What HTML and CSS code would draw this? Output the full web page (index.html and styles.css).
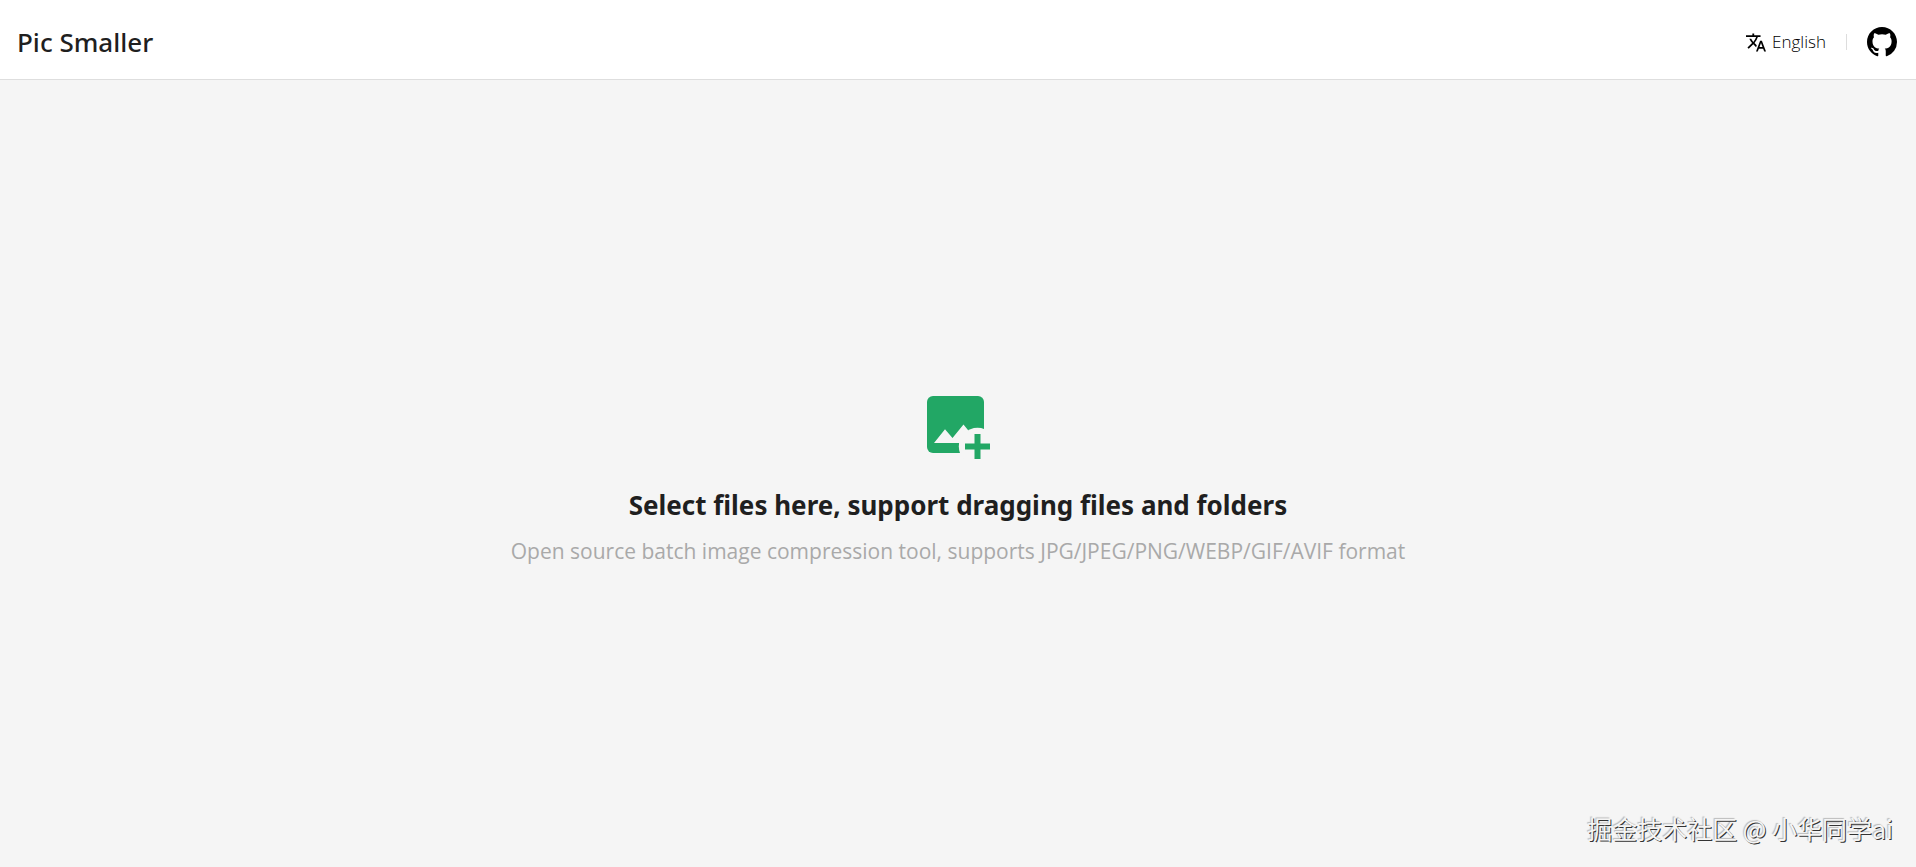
FILE: index.html
```html
<!DOCTYPE html>
<html lang="en">
<head>
<meta charset="utf-8">
<title>Pic Smaller</title>
<link rel="stylesheet" href="styles.css">
</head>
<body>
<header class="header">
  <h1 class="brand">Pic Smaller</h1>
  <nav class="tools">
    <button class="language" type="button">
      <svg class="language-icon" viewBox="1 2 22 20" aria-hidden="true"><path d="M12.87 15.07l-2.54-2.51.03-.03A17.52 17.52 0 0 0 14.07 6H17V4h-7V2H8v2H1v1.99h11.17C11.5 7.92 10.44 9.75 9 11.35 8.07 10.32 7.3 9.19 6.69 8h-2c.73 1.63 1.73 3.17 2.98 4.56l-5.09 5.02L4 19l5-5 3.11 3.11.76-2.04zM18.5 10h-2L12 22h2l1.12-3h4.75L21 22h2l-4.5-12zm-2.62 7l1.62-4.33L19.12 17h-3.24z"/></svg>
      <span>English</span>
    </button>
    <span class="divider"></span>
    <a class="github" href="#" aria-label="GitHub">
      <svg class="github-icon" viewBox="0 0 16 16" aria-hidden="true"><path d="M8 0C3.58 0 0 3.58 0 8c0 3.54 2.29 6.53 5.47 7.59.4.07.55-.17.55-.38 0-.19-.01-.82-.01-1.49-2.01.37-2.53-.49-2.69-.94-.09-.23-.48-.94-.82-1.13-.28-.15-.68-.52-.01-.53.63-.01 1.08.58 1.23.82.72 1.21 1.87.87 2.33.66.07-.52.28-.87.51-1.07-1.78-.2-3.64-.89-3.64-3.95 0-.87.31-1.59.82-2.15-.08-.2-.36-1.02.08-2.12 0 0 .67-.21 2.2.82.64-.18 1.32-.27 2-.27s1.36.09 2 .27c1.53-1.04 2.2-.82 2.2-.82.44 1.1.16 1.92.08 2.12.51.56.82 1.27.82 2.15 0 3.07-1.87 3.75-3.65 3.95.29.25.54.73.54 1.48 0 1.07-.01 1.93-.01 2.2 0 .21.15.46.55.38A8.01 8.01 0 0 0 16 8c0-4.42-3.58-8-8-8z"/></svg>
    </a>
  </nav>
</header>
<main class="upload">
  <svg class="upload-icon" viewBox="0 0 63 63" aria-hidden="true">
    <path class="green" d="M6 0H51a6 6 0 0 1 6 6V57H6a6 6 0 0 1-6-6V6a6 6 0 0 1 6-6z"/>
    <circle class="cutout" cx="50.5" cy="50.5" r="18.7"/>
    <path class="cutout" d="M7 47 18 33.3 25.5 42 36.5 28.5 45 39V47z"/>
    <path class="green" d="M47.500 38h6v9.500H63v6h-9.500V63h-6v-9.500H38v-6h9.500z"/>
  </svg>
  <h2 class="upload-title">Select files here, support dragging files and folders</h2>
  <p class="upload-note">Open source batch image compression tool, supports JPG/JPEG/PNG/WEBP/GIF/AVIF format</p>
</main>
<div class="watermark">掘金技术社区 @ 小华同学ai</div>
</body>
</html>
```
FILE: styles.css
```css
* { box-sizing: border-box; }
body {
  margin: 0;
  min-height: 100vh;
  display: flex;
  flex-direction: column;
  background: #f5f5f5;
  color: #1f1f1f;
  font-family: "Open Sans", "Noto Sans", sans-serif;
}
.header {
  display: flex;
  align-items: center;
  justify-content: space-between;
  height: 80px;
  padding: 5px 19px 0 17px;
  background: #fff;
  border-bottom: 1px solid #dedede;
}
.brand { margin: 0; font-family: "Noto Sans", sans-serif; font-size: 26px; line-height: 40px; font-weight: 500; }
.tools { display: flex; align-items: center; }
.language {
  display: flex;
  align-items: center;
  gap: 6px;
  padding: 0;
  border: 0;
  background: none;
  color: #000;
  font-family: "Open Sans", sans-serif;
  font-size: 17px;
  font-weight: 300;
  line-height: 24px;
}
.language-icon { width: 20px; height: 19px; fill: #000; }
.divider { width: 1px; height: 16px; margin: 0 20px; background: #ddd; }
.github { display: flex; }
.github-icon { width: 30px; height: 30px; }
.upload {
  flex: 1;
  display: flex;
  flex-direction: column;
  align-items: center;
  justify-content: center;
  padding-top: 14px;
}
.upload-icon { width: 63px; height: 63px; }
.green { fill: #22a765; }
.cutout { fill: #f5f5f5; }
.upload-title { margin: 28px 0 0; font-family: "Noto Sans", sans-serif; font-size: 26px; line-height: 36px; font-weight: 700; }
.upload-note { margin: 14px 0 0; font-size: 21px; line-height: 28px; color: #a9a9a9; }
.watermark {
  position: absolute;
  right: 23px;
  bottom: 21px;
  font-family: "Noto Sans CJK SC", sans-serif;
  font-size: 25px;
  line-height: 36px;
  color: #f5f5f5;
  text-shadow: 1px 1px 0 #333, -1px -1px 1px #bbb;
}
```
